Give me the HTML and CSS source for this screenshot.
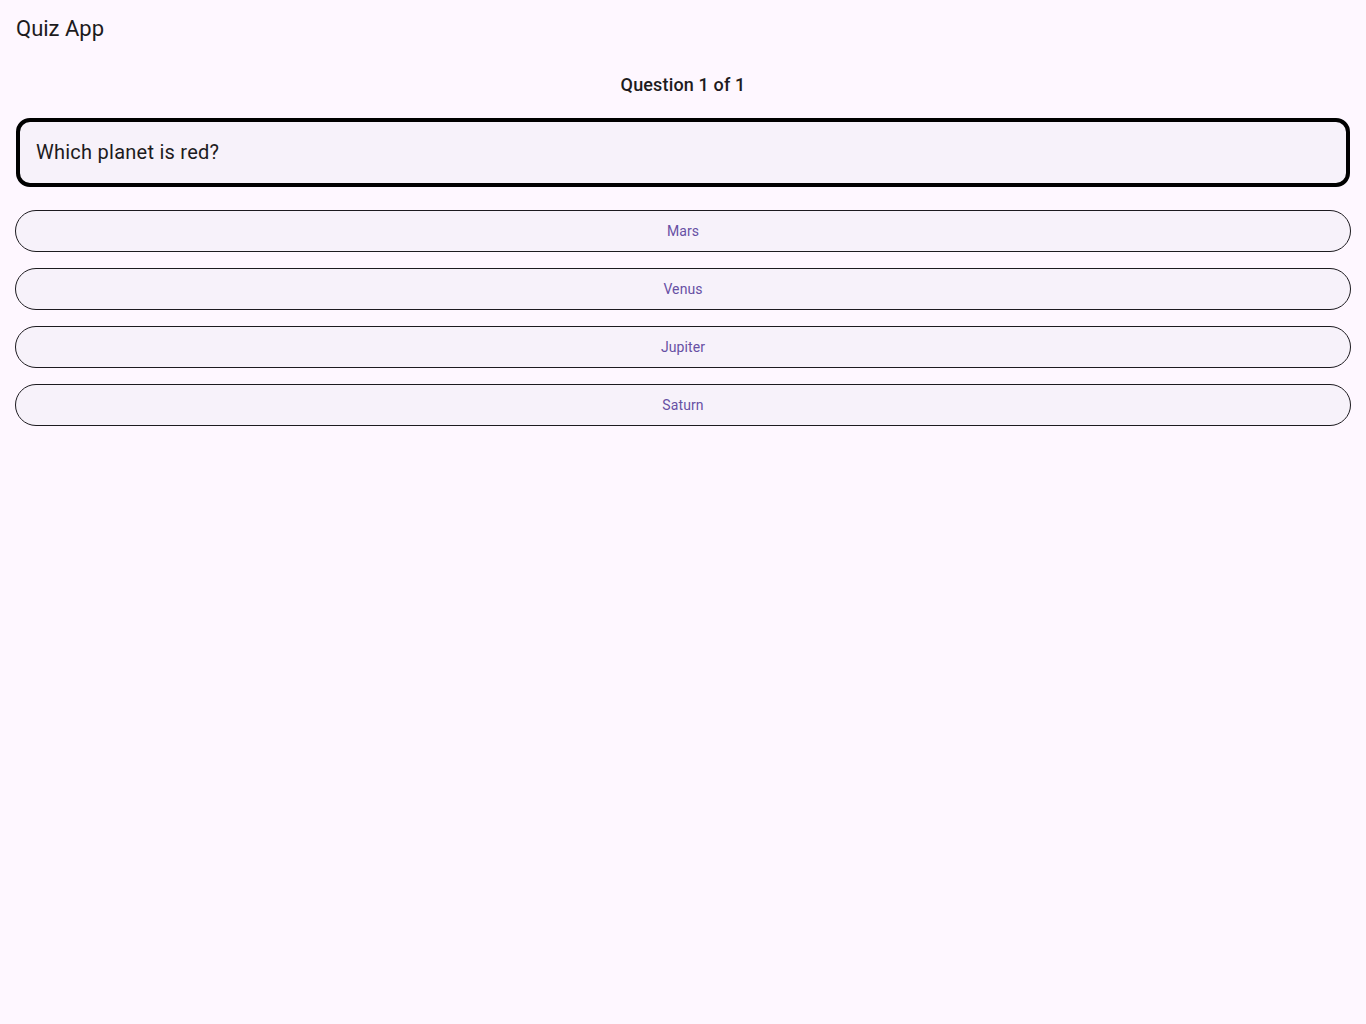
FILE: index.html
```html
<!DOCTYPE html>
<html>
<head>
<meta charset="utf-8">
<link rel="stylesheet" href="styles.css">
</head>
<body>
<header class="appbar"><span class="title">Quiz App</span></header>
<main class="content">
  <div class="progress">Question 1 of 1</div>
  <div class="question-card">Which planet is red?</div>
  <div class="answers">
    <button class="answer">Mars</button>
    <button class="answer">Venus</button>
    <button class="answer">Jupiter</button>
    <button class="answer">Saturn</button>
  </div>
</main>
</body>
</html>
```

FILE: styles.css
```css
html, body {
  margin: 0;
  padding: 0;
  background: #fef7ff;
  font-family: Roboto, "Liberation Sans", sans-serif;
  color: #1d1b20;
}
.appbar {
  height: 56px;
  display: flex;
  align-items: center;
  padding: 1px 16px 0;
  box-sizing: border-box;
}
.title {
  font-size: 22px;
  line-height: 28px;
  font-weight: 400;
}
.content {
  display: flex;
  flex-direction: column;
  padding: 16px 15px;
}
.progress {
  text-align: center;
  font-size: 18px;
  line-height: 26px;
  font-weight: 500;
  letter-spacing: 0.15px;
}
.question-card {
  margin: 20px 1px 0;
  border: 4px solid #000;
  border-radius: 14px;
  background: #f7f2fa;
  padding: 16px;
  font-size: 20px;
  line-height: 29px;
  letter-spacing: 0.25px;
}
.answers {
  display: flex;
  flex-direction: column;
  gap: 16px;
  margin-top: 23px;
}
.answer {
  height: 42px;
  border: 1px solid #1d1b20;
  border-radius: 21px;
  background: #f7f2fa;
  color: #6750a4;
  font-family: Roboto, "Liberation Sans", sans-serif;
  font-size: 14px;
  font-weight: 400;
  letter-spacing: 0.1px;
  padding: 0 24px;
  cursor: pointer;
}
```
